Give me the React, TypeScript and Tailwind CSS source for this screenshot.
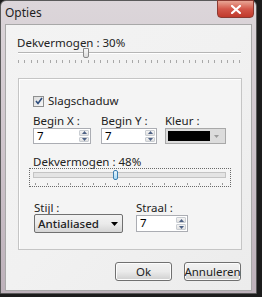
import React from "react";

const font = { fontFamily: '"Noto Sans", "Open Sans", sans-serif' };

function Spinner({ value, width, height }: { value: string; width: string; height: string }) {
  return (
    <div className={`flex ${height} ${width} border border-[#abadb3] bg-white`}>
      <div className="flex-1 pl-[3px] text-[11.5px] leading-[14px] text-black">{value}</div>
      <div className="flex w-[11px] flex-col gap-[1px] py-[1px] pr-[1px]">
        <div className="flex flex-1 items-center justify-center rounded-[1px] border border-[#c9cdd2] bg-gradient-to-b from-[#f4f4f4] to-[#e0e0e0]">
          <svg width="5" height="3" viewBox="0 0 5 3"><path d="M0 3 L2.5 0 L5 3 Z" fill="#4d6185" /></svg>
        </div>
        <div className="flex flex-1 items-center justify-center rounded-[1px] border border-[#c9cdd2] bg-gradient-to-b from-[#f4f4f4] to-[#e0e0e0]">
          <svg width="5" height="3" viewBox="0 0 5 3"><path d="M0 0 L2.5 3 L5 0 Z" fill="#4d6185" /></svg>
        </div>
      </div>
    </div>
  );
}

export default function App() {
  const ticks1 = Array.from({ length: 36 });
  const ticks2 = Array.from({ length: 17 });
  return (
    <div className="relative h-[297px] w-[262px] overflow-hidden bg-[#1c1c1c]" style={font}>
      {/* window frame */}
      <div className="absolute left-0 top-0 h-[294px] w-[257px] rounded-t-[6px] border border-[#5a5a5a] bg-gradient-to-b from-[#dcd6da] via-[#cfc5cc] to-[#bdb1ba]">
        {/* title bar */}
        <div className="flex h-[23px] items-center pl-[4px] text-[12px] text-[#1e1e1e]">Opties</div>
        {/* close button */}
        <div className="absolute right-[2px] top-[-1px] flex h-[18px] w-[37px] items-center justify-center rounded-b-[4px] border border-[#8b3a32] bg-gradient-to-b from-[#e8a595] via-[#d3574a] to-[#c0392b]">
          <svg width="10" height="9" viewBox="0 0 10 9">
            <path d="M1 1 L9 8 M9 1 L1 8" stroke="#ffffff" strokeWidth="2.2" strokeLinecap="square" />
          </svg>
        </div>
        {/* client area */}
        <div className="mx-[4px] flex h-[267px] flex-col border border-[#a8a8a8] bg-gradient-to-br from-[#f3f3f3] via-[#f1f1f1] to-[#ececec] text-[11.5px] text-[#222222]">
          <div className="ml-[11px] mt-[11px] leading-[14px]">Dekvermogen : 30%</div>
          {/* slider 1 */}
          <div className="relative ml-[12px] mt-[-2px] h-[15px] w-[223px]">
            <div className="absolute left-0 right-0 top-[4px] h-[2px] border-t border-[#b5b5b5] bg-white" />
            <div className="absolute left-[65px] top-0 h-[10px] w-[6px] rounded-b-[2px] border border-[#8a8a8a] bg-gradient-to-b from-[#f8f8f8] to-[#dcdcdc]" />
            <div className="absolute left-0 right-0 top-[12px] flex justify-between">
              {ticks1.map((_, i) => (
                <div key={i} className="h-[3px] w-[1px] bg-[#a8a8a8]" />
              ))}
            </div>
          </div>
          {/* group box */}
          <div className="ml-[12px] mt-[15px] flex h-[172px] w-[224px] flex-col border border-[#c5c5c5] bg-[#f4f4f4] shadow-[inset_1px_1px_0_#ffffff]">
            <div className="ml-[14px] mt-[15px] flex items-center gap-[4px]">
              <div className="flex h-[11px] w-[11px] items-center justify-center border border-[#8e8f8f] bg-gradient-to-br from-[#dcdcdc] to-[#f8f8f8]">
                <svg width="8" height="8" viewBox="0 0 8 8"><path d="M1 4 L3 6.5 L7 1" stroke="#2d4c7c" strokeWidth="1.6" fill="none" /></svg>
              </div>
              <span className="leading-[14px]">Slagschaduw</span>
            </div>
            <div className="ml-[14px] mt-[7px] flex">
              <div className="flex flex-col">
                <span className="leading-[12px]">Begin X :</span>
                <div className="mt-[1px]"><Spinner value="7" width="w-[58px]" height="h-[16px]" /></div>
              </div>
              <div className="ml-[10px] flex flex-col">
                <span className="leading-[12px]">Begin Y :</span>
                <div className="mt-[1px]"><Spinner value="7" width="w-[56px]" height="h-[16px]" /></div>
              </div>
              <div className="ml-[8px] flex flex-col">
                <span className="leading-[12px]">Kleur :</span>
                <div className="mt-[1px] flex h-[16px] w-[61px] border border-[#a8a8a8] bg-[#dcdcdc] p-[2px]">
                  <div className="flex-1 bg-black" />
                  <div className="flex w-[13px] items-center justify-center">
                    <svg width="5" height="3" viewBox="0 0 5 3"><path d="M0 0 L2.5 3 L5 0 Z" fill="#9a9a9a" /></svg>
                  </div>
                </div>
              </div>
            </div>
            <div className="ml-[14px] mt-[11px] leading-[13px]">Dekvermogen : 48%</div>
            {/* slider 2 */}
            <div className="relative ml-[10px] h-[19px] w-[202px] border border-dotted border-[#6a6a6a]">
              <div className="absolute left-[3px] right-[4px] top-[3px] h-[6px] border border-[#c4c4c4] bg-[#e4e4e4]" />
              <div className="absolute left-[83px] top-[1px] h-[10px] w-[5px] rounded-[2px] border border-[#3c7fb1] bg-gradient-to-b from-[#eaf6fd] to-[#a7d9f5]" />
              <div className="absolute left-[5px] right-[7px] top-[14px] flex justify-between">
                {ticks2.map((_, i) => (
                  <div key={i} className="h-[2px] w-[1px] bg-[#9a9a9a]" />
                ))}
              </div>
            </div>
            <div className="ml-[15px] mt-[14px] flex">
              <div className="flex flex-col">
                <span className="leading-[13px]">Stijl :</span>
                <div className="flex h-[19px] w-[89px] items-center justify-between rounded-[2px] border border-[#707070] bg-gradient-to-b from-[#f2f2f2] via-[#ebebeb] to-[#d5d5d5] pl-[3px] pr-[4px]">
                  <span className="font-medium leading-[14px]">Antialiased</span>
                  <svg width="7" height="4" viewBox="0 0 7 4"><path d="M0 0 L3.5 4 L7 0 Z" fill="#000" /></svg>
                </div>
              </div>
              <div className="ml-[13px] flex flex-col">
                <span className="leading-[13px]">Straal :</span>
                <div className="mt-[1px]"><Spinner value="7" width="w-[52px]" height="h-[17px]" /></div>
              </div>
            </div>
          </div>
          {/* buttons */}
          <div className="mr-[10px] mt-[12px] flex justify-end gap-[12px]">
            <div className="flex h-[19px] w-[57px] items-center justify-center rounded-[3px] border border-[#707070] bg-gradient-to-b from-[#f2f2f2] via-[#ebebeb] to-[#cfcfcf] shadow-[inset_0_0_0_1px_#fcfcfc]">Ok</div>
            <div className="flex h-[19px] w-[57px] items-center justify-center rounded-[3px] border border-[#707070] bg-gradient-to-b from-[#f2f2f2] via-[#ebebeb] to-[#cfcfcf] shadow-[inset_0_0_0_1px_#fcfcfc]">Annuleren</div>
          </div>
        </div>
      </div>
    </div>
  );
}
